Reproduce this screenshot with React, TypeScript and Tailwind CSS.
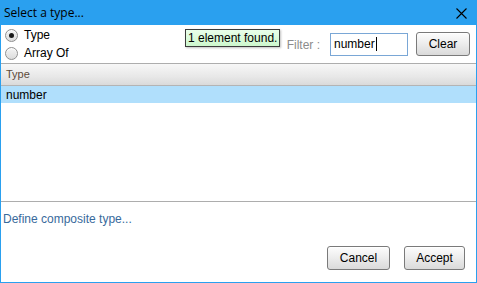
const ui = "font-['Liberation_Sans',Arial,sans-serif]";

function Radio({ checked, label }: { checked?: boolean; label: string }) {
  return (
    <label className="flex h-[18px] items-center gap-[6px] pl-[4px]">
      <span className="flex h-[13px] w-[13px] items-center justify-center rounded-full border border-[#8f8f8f] bg-[linear-gradient(180deg,#f4f4f4_0%,#dcdcdc_100%)] shadow-[inset_0_1px_1px_rgba(255,255,255,0.9)]">
        {checked && <span className="h-[5px] w-[5px] rounded-full bg-[#1a1a1a]" />}
      </span>
      <span className="text-[12px] leading-[14px] text-black">{label}</span>
    </label>
  );
}

function Button({ children, className }: { children: string; className?: string }) {
  return (
    <button
      type="button"
      className={
        "flex h-[24px] items-center justify-center rounded-[3px] border border-[#7a7a7a] bg-[linear-gradient(180deg,#fdfdfd_0%,#ececec_50%,#dadada_100%)] text-[12px] leading-[14px] text-black shadow-[inset_0_1px_0_#ffffff] " +
        (className || "")
      }
    >
      {children}
    </button>
  );
}

export default function App() {
  return (
    <div className={"relative flex h-[283px] w-[477px] flex-col bg-white " + ui}>
      <div className="flex h-[25px] shrink-0 items-center justify-between bg-[#2aa0ef] pl-[4px] pr-[10px]">
        <span className="font-['Open_Sans','Noto_Sans',sans-serif] text-[12px] leading-[14px] text-black">
          Select a type...
        </span>
        <svg width="11" height="11" viewBox="0 0 11 11" className="mt-px">
          <path d="M0.5 0.5 L10.5 10.5 M10.5 0.5 L0.5 10.5" stroke="#000" strokeWidth="1.1" />
        </svg>
      </div>

      <div className="flex flex-1 flex-col border-x border-b border-[#2aa0ef]">
        <div className="flex h-[38px] shrink-0 items-start justify-between">
          <div className="flex flex-col pt-px">
            <Radio checked label="Type" />
            <Radio label="Array Of" />
          </div>
          <div className="flex items-center pt-[7px] pr-[6px]">
            <span className="mr-[10px] mt-[1px] text-[12px] leading-[14px] text-[#8c8c8c]">Filter :</span>
            <div className="flex h-[23px] w-[78px] items-center border border-[#7aa7d6] bg-white px-[3px] text-[12px] leading-[14px] text-black">
              number
              <span className="ml-px h-[14px] w-px bg-black" />
            </div>
            <Button className="ml-[8px] w-[54px]">Clear</Button>
          </div>
        </div>

        <div className="flex h-[139px] shrink-0 flex-col border-y border-[#adadad]">
          <div className="flex h-[22px] items-center border-b border-[#b4b4b4] bg-[linear-gradient(180deg,#f7f7f7_0%,#e8e8e8_60%,#dadada_100%)] pl-[5px] text-[11px] leading-[13px] text-[#5c4a3a]">
            Type
          </div>
          <div className="flex h-[17px] items-center bg-[#b0dffc] pl-[5px] text-[12px] leading-[14px] text-black">
            number
          </div>
        </div>

        <div className="pl-[2px] pt-[10px] text-[12px] leading-[14px] text-[#386a9c]">
          Define composite type...
        </div>

        <div className="mt-auto flex justify-end gap-[14px] pb-[12px] pr-[11px]">
          <Button className="w-[63px]">Cancel</Button>
          <Button className="w-[61px]">Accept</Button>
        </div>
      </div>

      <div className="absolute left-[185px] top-[29px] flex h-[18px] items-center border border-[#3c3c3c] bg-[linear-gradient(180deg,#eaffea_0%,#cdf7cd_100%)] px-[2px] text-[12px] leading-[14px] text-black shadow-[1px_1px_2px_rgba(0,0,0,0.25)]">
        1 element found.
      </div>
    </div>
  );
}
